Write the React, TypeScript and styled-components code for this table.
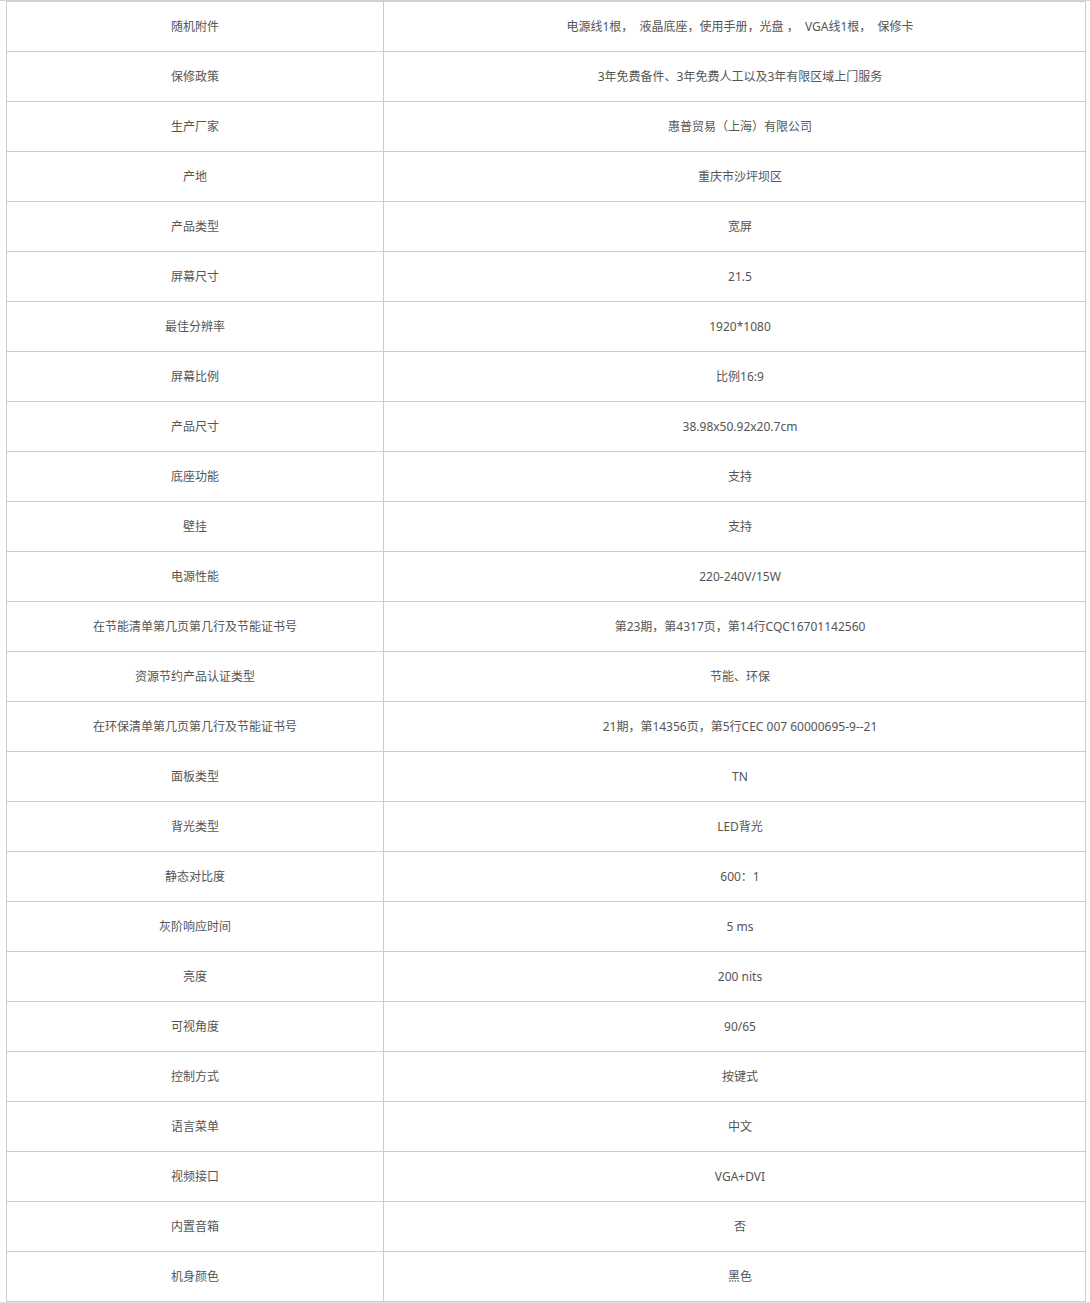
import styled, { createGlobalStyle } from "styled-components";

const GlobalStyle = createGlobalStyle`
  html, body {
    margin: 0;
    padding: 0;
    background: #fff;
  }
  body {
    font-family: "Noto Sans", "Noto Sans CJK SC", sans-serif;
  }
`;

const Wrap = styled.div`
  width: 1090px;
  border-top: 1px solid #d4d4d4;
  border-bottom: 1px solid #e2e2e2;
`;

const SpecTable = styled.table`
  margin-left: 6px;
  width: 1080px;
  border-collapse: collapse;
  table-layout: fixed;
`;

const Cell = styled.td<{ $wide?: boolean }>`
  width: ${(p) => (p.$wide ? "auto" : "376px")};
  height: 49px;
  padding: 0 0 0 ${(p) => (p.$wide ? "11px" : "0")};
  border: 1px solid #cdcdcd;
  text-align: center;
  vertical-align: middle;
  font-size: 12px;
  line-height: 16px;
  color: #555;
  white-space: pre;
`;

const specs: [string, string][] = [
  ["随机附件", "电源线1根，  液晶底座，使用手册，光盘 ，  VGA线1根，  保修卡"],
  ["保修政策", "3年免费备件、3年免费人工以及3年有限区域上门服务"],
  ["生产厂家", "惠普贸易（上海）有限公司"],
  ["产地", "重庆市沙坪坝区"],
  ["产品类型", "宽屏"],
  ["屏幕尺寸", "21.5"],
  ["最佳分辨率", "1920*1080"],
  ["屏幕比例", "比例16:9"],
  ["产品尺寸", "38.98x50.92x20.7cm"],
  ["底座功能", "支持"],
  ["壁挂", "支持"],
  ["电源性能", "220-240V/15W"],
  ["在节能清单第几页第几行及节能证书号", "第23期，第4317页，第14行CQC16701142560"],
  ["资源节约产品认证类型", "节能、环保"],
  ["在环保清单第几页第几行及节能证书号", "21期，第14356页，第5行CEC 007 60000695-9--21"],
  ["面板类型", "TN"],
  ["背光类型", "LED背光"],
  ["静态对比度", "600：1"],
  ["灰阶响应时间", "5 ms"],
  ["亮度", "200 nits"],
  ["可视角度", "90/65"],
  ["控制方式", "按键式"],
  ["语言菜单", "中文"],
  ["视频接口", "VGA+DVI"],
  ["内置音箱", "否"],
  ["机身颜色", "黑色"],
];

const App = () => {
  return (
    <>
      <GlobalStyle />
      <Wrap>
        <SpecTable>
          <tbody>
            {specs.map(([name, value]) => (
              <tr key={name}>
                <Cell>{name}</Cell>
                <Cell $wide>{value}</Cell>
              </tr>
            ))}
          </tbody>
        </SpecTable>
      </Wrap>
    </>
  );
};

export default App;
